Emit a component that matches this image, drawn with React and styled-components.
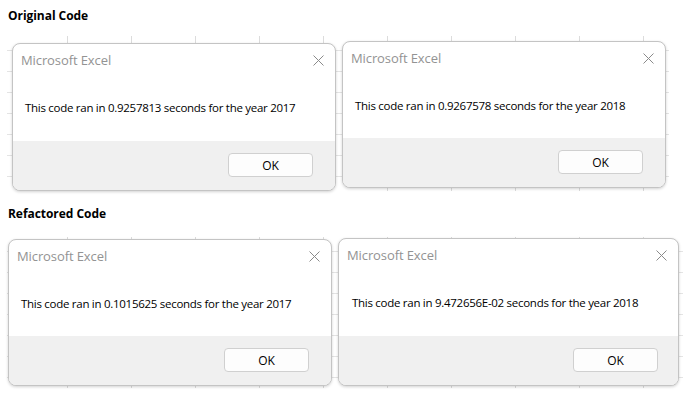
import React from 'react';
import styled, { createGlobalStyle } from 'styled-components';

const GlobalStyle = createGlobalStyle`
  body {
    margin: 0;
    background: #ffffff;
    font-family: 'Open Sans', 'Liberation Sans', sans-serif;
  }
`;

const Page = styled.div`
  width: 698px;
  height: 415px;
  padding: 6px 0 0 8px;
  box-sizing: border-box;
`;

const Heading = styled.div`
  font-family: 'Open Sans', sans-serif;
  font-weight: 700;
  font-size: 12px;
  color: #000;
  height: 20px;
  line-height: 20px;
  margin-bottom: ${(p) => p.$gap}px;
  letter-spacing: -0.05px;
`;

const Shot = styled.div`
  display: flex;
  align-items: flex-start;
  gap: ${(p) => p.$gap}px;
  width: ${(p) => p.$width}px;
  height: ${(p) => p.$height}px;
  margin-left: ${(p) => p.$left}px;
  padding: ${(p) => p.$pad};
  box-sizing: border-box;
  background-color: #ffffff;
  background-image:
    repeating-linear-gradient(to right, transparent 0, transparent 63px, #dcdcdc 63px, #dcdcdc 64px),
    repeating-linear-gradient(to bottom, transparent 0, transparent 20px, #e4e4e4 20px, #e4e4e4 21px);
  background-position: -3px -6px;
  margin-bottom: ${(p) => p.$below}px;
`;

const Dialog = styled.div`
  width: ${(p) => p.$w}px;
  height: ${(p) => p.$h}px;
  margin-top: ${(p) => p.$top}px;
  box-sizing: border-box;
  background: #ffffff;
  border: 1px solid #c4c4c4;
  border-radius: 8px;
  box-shadow: 0 1px 3px rgba(0, 0, 0, 0.18);
  display: flex;
  flex-direction: column;
  overflow: hidden;
  flex-shrink: 0;
`;

const TitleBar = styled.div`
  height: 32px;
  display: flex;
  align-items: center;
  justify-content: space-between;
  padding: 0 11px 0 8px;
  font-size: 13px;
  color: #939393;
  letter-spacing: -0.1px;
`;

const Message = styled.div`
  flex: 1;
  display: flex;
  align-items: center;
  padding: 0 0 2px ${(p) => p.$indent}px;
  font-size: 11.5px;
  color: #000;
  letter-spacing: -0.28px;
`;

const Footer = styled.div`
  height: 49px;
  background: #f0f0f0;
  display: flex;
  justify-content: flex-end;
  align-items: flex-start;
  padding: 12px ${(p) => p.$right}px 0 0;
  box-sizing: border-box;
`;

const OkButton = styled.button`
  width: 85px;
  height: 24px;
  background: #fdfdfd;
  border: 1px solid #d0d0d0;
  border-radius: 4px;
  font-family: 'Open Sans', sans-serif;
  font-size: 12px;
  color: #000;
  padding: 0;
`;

const CloseIcon = () => (
  <svg width="11" height="11" viewBox="0 0 11 11">
    <path d="M0.5 0.5 L10.5 10.5 M10.5 0.5 L0.5 10.5" stroke="#8a8a8a" strokeWidth="1" fill="none" />
  </svg>
);

const ExcelDialog = ({ text, w, h, top, indent, right }) => (
  <Dialog $w={w} $h={h} $top={top}>
    <TitleBar>
      <span>Microsoft Excel</span>
      <CloseIcon />
    </TitleBar>
    <Message $indent={indent}>{text}</Message>
    <Footer $right={right}>
      <OkButton>OK</OkButton>
    </Footer>
  </Dialog>
);

const App = () => (
  <Page>
    <GlobalStyle />
    <Heading $gap={10}>Original Code</Heading>
    <Shot $width={662} $height={155} $left={-1} $gap={6} $pad="5px 0 0 5px" $below={13}>
      <ExcelDialog
        w={324} h={148} top={2} indent={12} right={22}
        text="This code ran in 0.9257813 seconds for the year 2017"
      />
      <ExcelDialog
        w={324} h={147} top={0} indent={12} right={22}
        text="This code ran in 0.9267578 seconds for the year 2018"
      />
    </Shot>
    <Heading $gap={13}>Refactored Code</Heading>
    <Shot $width={676} $height={151} $left={-1} $gap={6} $pad="1px 0 0 1px" $below={0}>
      <ExcelDialog
        w={324} h={147} top={1} indent={12} right={22}
        text="This code ran in 0.1015625 seconds for the year 2017"
      />
      <ExcelDialog
        w={341} h={148} top={0} indent={13} right={20}
        text="This code ran in 9.472656E-02 seconds for the year 2018"
      />
    </Shot>
  </Page>
);

export default App;
